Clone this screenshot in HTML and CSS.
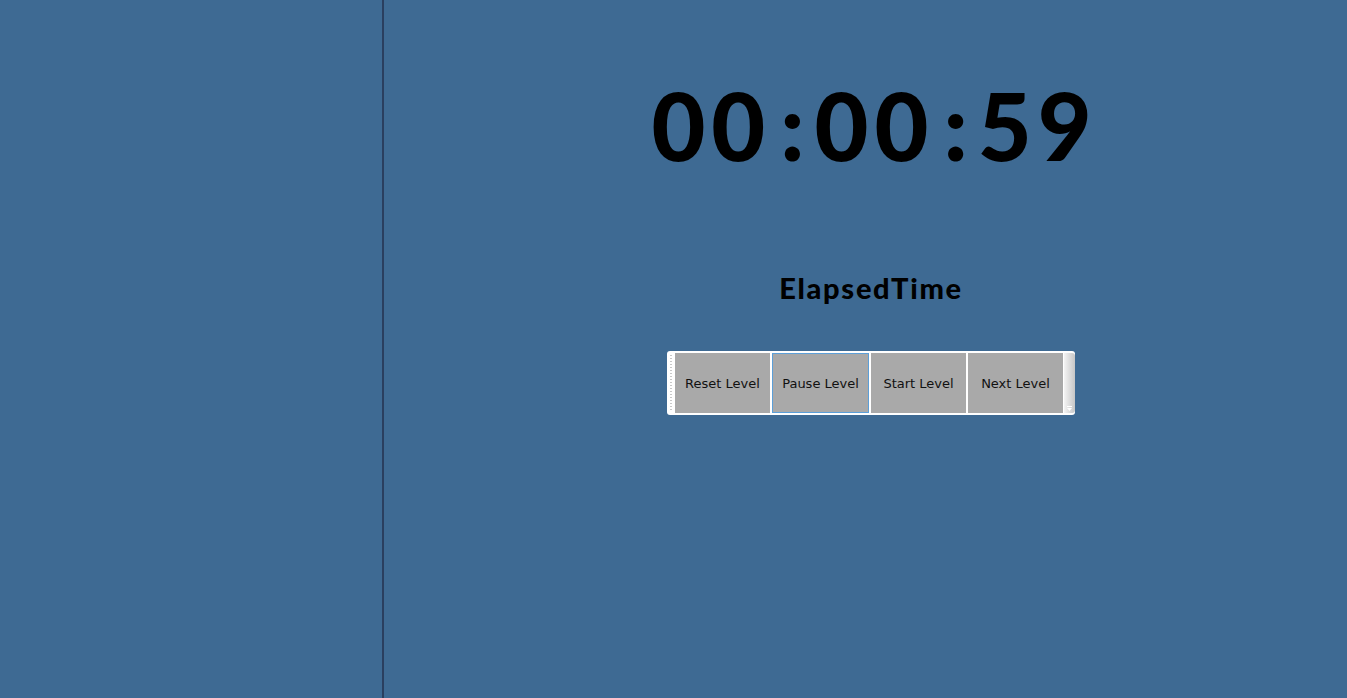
FILE: index.html
```html
<!DOCTYPE html>
<html>
<head>
<meta charset="utf-8">
<link rel="stylesheet" href="styles.css">
</head>
<body>
<div class="app">
  <div class="left-pane"></div>
  <div class="main-pane">
    <div class="timer"><span class="dig">00</span><span class="colon">:</span><span class="dig">00</span><span class="colon">:</span><span class="dig">59</span></div>
    <div class="caption">ElapsedTime</div>
    <div class="toolbar">
      <div class="grip"></div>
      <div class="buttons">
        <div class="btn">Reset Level</div>
        <div class="btn active">Pause Level</div>
        <div class="btn">Start Level</div>
        <div class="btn">Next Level</div>
      </div>
      <div class="overflow">
        <svg width="7" height="6" viewBox="0 0 7 6" class="ovf-icon">
          <rect x="1" y="0" width="5" height="1" fill="#ffffff"/>
          <path d="M1 2 H6 L3.5 5 Z" fill="#ffffff"/>
        </svg>
      </div>
    </div>
  </div>
</div>
</body>
</html>
```

FILE: styles.css
```css
html, body {
  margin: 0;
  padding: 0;
  height: 100%;
  background: #3e6a93;
}
.app {
  display: flex;
  height: 698px;
  overflow: hidden;
}
.left-pane {
  width: 382px;
  flex: none;
  border-right: 2px solid #2a3f5f;
}
.main-pane {
  flex: 1;
  display: flex;
  flex-direction: column;
  align-items: center;
  padding-left: 11px;
}
.timer {
  margin-top: 65px;
  margin-right: -7px;
  font-family: "Lato", sans-serif;
  font-weight: 900;
  font-size: 93px;
  line-height: 120px;
  color: #000;
  white-space: nowrap;
}
.dig {
  letter-spacing: 6px;
}
.colon {
  display: inline-block;
  padding: 0 10px 0 9px;
}
.caption {
  margin-top: 86px;
  font-family: "Lato", sans-serif;
  font-weight: 900;
  font-size: 29px;
  line-height: 34px;
  letter-spacing: 1.7px;
  color: #000;
}
.toolbar {
  margin-top: 46px;
  display: flex;
  width: 408px;
  height: 64px;
  box-sizing: border-box;
  background: #ffffff;
  border-radius: 3px;
  padding: 2px 0 2px 3px;
}
.grip {
  width: 2px;
  margin: 2px 3px 2px 0;
  background-image: linear-gradient(#c8c8c8 50%, transparent 50%);
  background-size: 2px 3px;
}
.buttons {
  display: flex;
  gap: 2px;
}
.btn {
  width: 95px;
  height: 60px;
  box-sizing: border-box;
  display: flex;
  align-items: center;
  justify-content: center;
  padding-top: 1px;
  background: #a9a9a9;
  font-family: "DejaVu Sans", Verdana, sans-serif;
  font-size: 13px;
  color: #111;
}
.btn.active {
  border: 1px solid #5c9fd8;
  width: 97px;
}
.overflow {
  flex: 1;
  margin-left: 1px;
  background: linear-gradient(90deg, #f4f4f4, #c6c6c6);
  border-radius: 0 3px 3px 0;
  display: flex;
  align-items: flex-end;
  justify-content: center;
  padding-bottom: 1px;
}
.ovf-icon {
  display: block;
}
```
